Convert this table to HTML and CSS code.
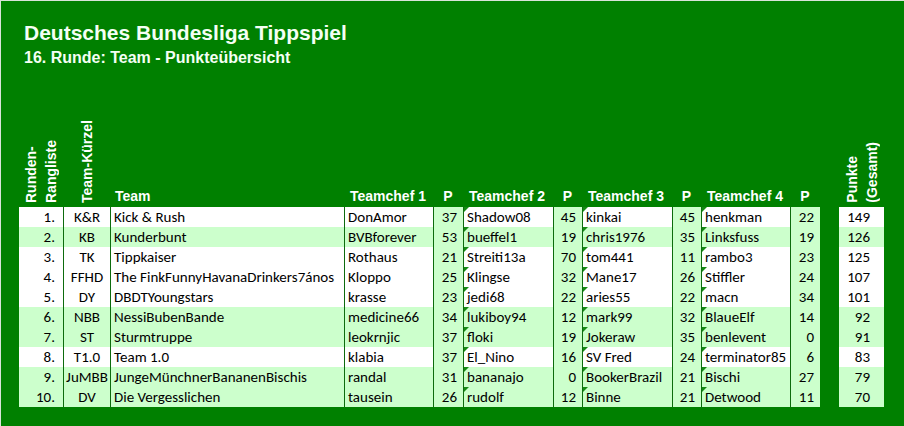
FILE: index.html
```html
<!DOCTYPE html>
<html lang="de">
<head>
<meta charset="utf-8">
<title>Deutsches Bundesliga Tippspiel</title>
<link rel="stylesheet" href="styles.css">
</head>
<body>
<div class="page">
  <div class="title">Deutsches Bundesliga Tippspiel</div>
  <div class="subtitle">16. Runde: Team - Punkteübersicht</div>
  <div class="grid">
    <div class="h hrot"><span class="rot">Runden-<br>Rangliste</span></div>
    <div class="h hrot"><span class="rot">Team-Kürzel</span></div>
    <div class="h ht">Team</div>
    <div class="h hn">Teamchef 1</div>
    <div class="h hp">P</div>
    <div class="h hn">Teamchef 2</div>
    <div class="h hp">P</div>
    <div class="h hn">Teamchef 3</div>
    <div class="h hp">P</div>
    <div class="h hn">Teamchef 4</div>
    <div class="h hp">P</div>
    <div class="h"></div>
    <div class="h hrot"><span class="rot">Punkte<br>(Gesamt)</span></div>

    <div class="row w"><div class="c rk">1.</div><div class="c kz">K&amp;R</div><div class="c tm">Kick &amp; Rush</div><div class="c nm">DonAmor</div><div class="c p">37</div><div class="c nm tri">Shadow08</div><div class="c p">45</div><div class="c nm tri">kinkai</div><div class="c p">45</div><div class="c nm tri">henkman</div><div class="c p">22</div><div class="gap"></div><div class="c tot">149</div></div>
    <div class="row g"><div class="c rk">2.</div><div class="c kz">KB</div><div class="c tm">Kunderbunt</div><div class="c nm">BVBforever</div><div class="c p">53</div><div class="c nm tri">bueffel1</div><div class="c p">19</div><div class="c nm tri">chris1976</div><div class="c p">35</div><div class="c nm tri">Linksfuss</div><div class="c p">19</div><div class="gap"></div><div class="c tot">126</div></div>
    <div class="row w"><div class="c rk">3.</div><div class="c kz">TK</div><div class="c tm">Tippkaiser</div><div class="c nm">Rothaus</div><div class="c p">21</div><div class="c nm tri">Streiti13a</div><div class="c p">70</div><div class="c nm tri">tom441</div><div class="c p">11</div><div class="c nm tri">rambo3</div><div class="c p">23</div><div class="gap"></div><div class="c tot">125</div></div>
    <div class="row w"><div class="c rk">4.</div><div class="c kz">FFHD</div><div class="c tm">The FinkFunnyHavanaDrinkers7ános</div><div class="c nm">Kloppo</div><div class="c p">25</div><div class="c nm tri">Klingse</div><div class="c p">32</div><div class="c nm tri">Mane17</div><div class="c p">26</div><div class="c nm tri">Stiffler</div><div class="c p">24</div><div class="gap"></div><div class="c tot">107</div></div>
    <div class="row w"><div class="c rk">5.</div><div class="c kz">DY</div><div class="c tm">DBDTYoungstars</div><div class="c nm">krasse</div><div class="c p">23</div><div class="c nm tri">jedi68</div><div class="c p">22</div><div class="c nm tri">aries55</div><div class="c p">22</div><div class="c nm tri">macn</div><div class="c p">34</div><div class="gap"></div><div class="c tot">101</div></div>
    <div class="row g"><div class="c rk">6.</div><div class="c kz">NBB</div><div class="c tm">NessiBubenBande</div><div class="c nm">medicine66</div><div class="c p">34</div><div class="c nm tri">lukiboy94</div><div class="c p">12</div><div class="c nm tri">mark99</div><div class="c p">32</div><div class="c nm tri">BlaueElf</div><div class="c p">14</div><div class="gap"></div><div class="c tot">92</div></div>
    <div class="row g"><div class="c rk">7.</div><div class="c kz">ST</div><div class="c tm">Sturmtruppe</div><div class="c nm">leokrnjic</div><div class="c p">37</div><div class="c nm tri">floki</div><div class="c p">19</div><div class="c nm tri">Jokeraw</div><div class="c p">35</div><div class="c nm tri">benlevent</div><div class="c p">0</div><div class="gap"></div><div class="c tot">91</div></div>
    <div class="row w"><div class="c rk">8.</div><div class="c kz">T1.0</div><div class="c tm">Team 1.0</div><div class="c nm">klabia</div><div class="c p">37</div><div class="c nm tri">El_Nino</div><div class="c p">16</div><div class="c nm tri">SV Fred</div><div class="c p">24</div><div class="c nm tri">terminator85</div><div class="c p">6</div><div class="gap"></div><div class="c tot">83</div></div>
    <div class="row g"><div class="c rk">9.</div><div class="c kz">JuMBB</div><div class="c tm">JungeMünchnerBananenBischis</div><div class="c nm">randal</div><div class="c p">31</div><div class="c nm tri">bananajo</div><div class="c p">0</div><div class="c nm tri">BookerBrazil</div><div class="c p">21</div><div class="c nm tri">Bischi</div><div class="c p">27</div><div class="gap"></div><div class="c tot">79</div></div>
    <div class="row g"><div class="c rk">10.</div><div class="c kz">DV</div><div class="c tm">Die Vergesslichen</div><div class="c nm">tausein</div><div class="c p">26</div><div class="c nm tri">rudolf</div><div class="c p">12</div><div class="c nm tri">Binne</div><div class="c p">21</div><div class="c nm tri">Detwood</div><div class="c p">11</div><div class="gap"></div><div class="c tot">70</div></div>
  </div>
</div>
</body>
</html>
```
FILE: styles.css
```css
html, body {
  margin: 0;
  padding: 0;
  background: #008000;
}
.page {
  box-sizing: border-box;
  width: 904px;
  height: 426px;
  background: #008000;
  border-top: 1px solid #d8e4d8;
  border-left: 1px solid #d8e4d8;
  padding-top: 20px;
  overflow: hidden;
}
.title {
  margin-left: 23px;
  font-family: "Liberation Sans", Arial, sans-serif;
  font-weight: bold;
  font-size: 21px;
  line-height: 24px;
  color: #f4fff4;
}
.subtitle {
  margin-left: 23px;
  margin-top: 3px;
  font-family: "Liberation Sans", Arial, sans-serif;
  font-weight: bold;
  font-size: 16px;
  line-height: 20px;
  color: #f4fff4;
}
.grid {
  margin-top: 39px;
  margin-left: 18px;
  display: grid;
  grid-template-columns: 44px 47px 234px 89px 30px 90px 29px 90px 29px 89px 30px 19px 45px;
  grid-template-rows: 100px repeat(10, 20px);
}
.h {
  font-family: "Liberation Sans", Arial, sans-serif;
  font-weight: bold;
  font-size: 14px;
  line-height: 17px;
  color: #ffffff;
  align-self: end;
  padding-bottom: 2px;
  white-space: nowrap;
}
.ht { padding-left: 5px; }
.hn { padding-left: 6px; }
.hp { text-align: center; }
.hrot {
  display: flex;
  justify-content: center;
  padding-bottom: 4px;
}
.rot {
  writing-mode: vertical-rl;
  transform: rotate(180deg);
  line-height: 20px;
}
.row { display: contents; }
.c {
  box-sizing: border-box;
  position: relative;
  height: 20px;
  font-family: Carlito, Calibri, Lato, sans-serif;
  font-size: 15px;
  line-height: 20px;
  color: #000;
  white-space: nowrap;
  overflow: hidden;
  border-left: 1px solid #0d6b0d;
}
.row.w .c { background: #ffffff; }
.row.g .c { background: #ccffcc; }
.row .c.p { background: #ccffcc; }
.row .c.rk { border-left: none; text-align: right; padding-right: 8px; }
.kz { text-align: center; }
.tm { padding-left: 3px; }
.nm { padding-left: 3px; }
.p { text-align: right; padding-right: 6px; }
.row .c.tot { border-left: none; text-align: right; padding-right: 14px; }
.tri::before {
  content: "";
  position: absolute;
  left: 0;
  top: 0;
  width: 0;
  height: 0;
  border-left: 5px solid #148a14;
  border-bottom: 5px solid transparent;
}
```
